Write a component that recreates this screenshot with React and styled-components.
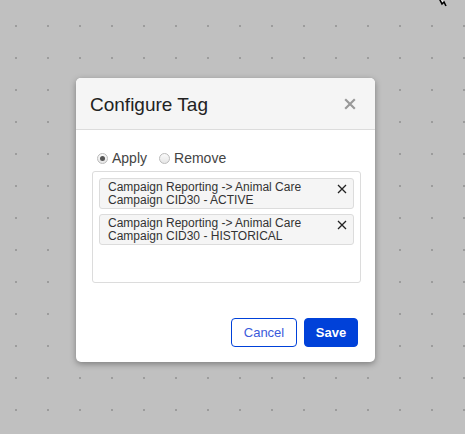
import React from "react";
import styled, { createGlobalStyle } from "styled-components";

const Global = createGlobalStyle`
  html, body { margin: 0; padding: 0; }
  body {
    background-color: #c0c0c0;
    background-image: radial-gradient(circle, #9c9c9c 0.9px, transparent 1.2px);
    background-size: 32px 32px;
    background-position: 0px 10px;
    font-family: "Liberation Sans", Arial, sans-serif;
  }
`;

const Page = styled.div`
  width: 465px;
  height: 434px;
  position: relative;
  overflow: hidden;
  padding: 78px 0 0 76px;
  box-sizing: border-box;
`;

const Modal = styled.div`
  width: 299px;
  height: 284px;
  background: #fff;
  border-radius: 5px;
  box-shadow: 0 2px 6px rgba(0,0,0,0.35);
  display: flex;
  flex-direction: column;
  overflow: hidden;
`;

const Header = styled.div`
  height: 51px;
  background: #f5f5f5;
  border-bottom: 1px solid #dcdcdc;
  display: flex;
  align-items: center;
  justify-content: space-between;
  padding: 0 19px 0 14px;
`;

const Title = styled.h2`
  margin: 0;
  font-size: 19px;
  font-weight: 400;
  color: #222;
  padding-top: 2px;
`;

const Close = styled.button`
  border: none;
  background: none;
  padding: 0;
  width: 12px;
  height: 12px;
  display: flex;
  color: #999;
  cursor: pointer;
`;

const Body = styled.div`
  padding: 20px 14px 0 16px;
  flex: 1;
`;

const RadioRow = styled.div`
  display: flex;
  align-items: center;
  gap: 12px;
  margin-bottom: 5px;
  padding-left: 5px;
`;

const RadioLabel = styled.label`
  display: flex;
  align-items: center;
  gap: 4px;
  font-size: 14px;
  color: #444;
`;

const Radio = styled.span`
  width: 11px;
  height: 11px;
  border-radius: 50%;
  border: 1px solid #bbb;
  background: linear-gradient(#fafafa, #e6e6e6);
  box-sizing: border-box;
  display: flex;
  align-items: center;
  justify-content: center;
  &::after {
    content: "";
    width: 5px;
    height: 5px;
    border-radius: 50%;
    background: ${p => (p.$checked ? "#555" : "transparent")};
  }
`;

const TagBox = styled.div`
  height: 112px;
  border: 1px solid #dcdcdc;
  border-radius: 3px;
  box-sizing: border-box;
  padding: 6px 6px;
  display: flex;
  flex-direction: column;
  gap: 5px;
`;

const Tag = styled.div`
  display: flex;
  justify-content: space-between;
  align-items: flex-start;
  background: #f5f5f5;
  border: 1px solid #dcdcdc;
  border-radius: 3px;
  padding: 2px 6px 2px 8px;
  height: 31px;
  box-sizing: border-box;
`;

const TagText = styled.div`
  font-size: 12px;
  line-height: 13px;
  color: #333;
`;

const TagClose = styled.span`
  display: flex;
  margin-top: 3px;
  color: #222;
`;

const Footer = styled.div`
  display: flex;
  justify-content: flex-end;
  gap: 7px;
  padding: 0 17px 15px 0;
`;

const Button = styled.button`
  height: 29px;
  border-radius: 4px;
  font-family: inherit;
  font-size: 13px;
  padding: 0;
  cursor: pointer;
  box-sizing: border-box;
  ${p =>
    p.$primary
      ? `background:#0041d9;border:1px solid #0041d9;color:#fff;width:54px;font-weight:700;`
      : `background:#fff;border:1px solid #0041d9;color:#3b5bdb;width:66px;`}
`;

const Cursor = styled.svg`
  position: absolute;
  top: -4px;
  left: 436px;
`;

const X = ({ size = 10, w = 1.4 }) => (
  <svg width={size} height={size} viewBox="0 0 10 10">
    <path d="M1 1L9 9M9 1L1 9" stroke="currentColor" strokeWidth={w} />
  </svg>
);

const tags = [
  ["Campaign Reporting -> Animal Care", "Campaign CID30 - ACTIVE"],
  ["Campaign Reporting -> Animal Care", "Campaign CID30 - HISTORICAL"],
];

export default function App() {
  return (
    <>
      <Global />
      <Page>
        <Cursor width="14" height="14" viewBox="0 0 14 14">
          <path d="M2 0L6 8L8 6L10 10" stroke="#000" strokeWidth="1.6" fill="none" />
          <path d="M3 0L7 6" stroke="#fff" strokeWidth="1" fill="none" />
        </Cursor>
        <Modal>
          <Header>
            <Title>Configure Tag</Title>
            <Close aria-label="close"><X size={12} w={1.8} /></Close>
          </Header>
          <Body>
            <RadioRow>
              <RadioLabel><Radio $checked />Apply</RadioLabel>
              <RadioLabel><Radio />Remove</RadioLabel>
            </RadioRow>
            <TagBox>
              {tags.map((t, i) => (
                <Tag key={i}>
                  <TagText>{t[0]}<br />{t[1]}</TagText>
                  <TagClose><X size={10} w={1.3} /></TagClose>
                </Tag>
              ))}
            </TagBox>
          </Body>
          <Footer>
            <Button>Cancel</Button>
            <Button $primary>Save</Button>
          </Footer>
        </Modal>
      </Page>
    </>
  );
}
